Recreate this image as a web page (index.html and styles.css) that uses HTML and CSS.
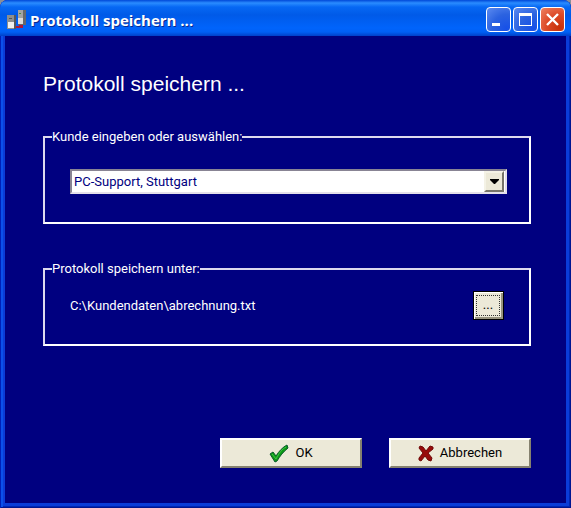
FILE: index.html
```html
<!DOCTYPE html>
<html lang="de">
<head>
<meta charset="utf-8">
<meta name="viewport" content="width=device-width, initial-scale=1">
<title>Protokoll speichern ...</title>
<link rel="stylesheet" href="styles.css">
</head>
<body>
<div class="window">
  <header class="titlebar">
    <svg class="app-icon" viewBox="0 0 20 20" aria-hidden="true">
      <path d="M11 0h8v15h-8z" fill="#66686b"/>
      <path d="M11 0h5v14h-5z" fill="#a3a3a2"/>
      <path d="M11 8h5v6h-5z" fill="#dedcda"/>
      <path d="M12 3h2v1h-2z" fill="#4a8a40"/>
      <path d="M0 5h9v14H0z" fill="#55585c"/>
      <path d="M0 5h7v14H0z" fill="#8c8e8f"/>
      <path d="M1 12h6v6H1z" fill="#f1efed"/>
      <path d="M2 8h3v1H2z" fill="#555"/>
      <path d="M9 16h3v-1h4v3H9z" fill="#b01838"/>
    </svg>
    <span class="caption">Protokoll speichern ...</span>
    <div class="window-buttons">
      <button type="button" class="window-button" aria-label="Minimieren">
        <svg viewBox="0 0 23 23"><path d="M5 15h8v3H5z" fill="#fff"/></svg>
      </button>
      <button type="button" class="window-button" aria-label="Maximieren">
        <svg viewBox="0 0 23 23"><path d="M5 5h13v13H5zM6 8v9h11V8z" fill="#fff" fill-rule="evenodd"/></svg>
      </button>
      <button type="button" class="window-button close" aria-label="Schließen">
        <svg viewBox="0 0 23 23"><path d="M6 6l11 11M17 6L6 17" stroke="#fff" stroke-width="2.4" fill="none"/></svg>
      </button>
    </div>
  </header>
  <form class="content">
    <h1 class="heading">Protokoll speichern ...</h1>
    <fieldset class="group customer">
      <legend><label for="kunde">Kunde eingeben oder auswählen:</label></legend>
      <div class="combo">
        <select id="kunde"><option>PC-Support, Stuttgart</option></select>
        <span class="combo-arrow" aria-hidden="true"><svg viewBox="0 0 9 5"><path d="M0 0h9v1L5 5H4L0 1z"/></svg></span>
      </div>
    </fieldset>
    <fieldset class="group">
      <legend>Protokoll speichern unter:</legend>
      <div class="target">
        <span>C:\Kundendaten\abrechnung.txt</span>
        <button type="button" class="browse"><span>...</span></button>
      </div>
    </fieldset>
    <div class="actions">
      <button type="button" class="action">
        <svg viewBox="0 0 20 19" aria-hidden="true"><path d="M1 10l3-2 3 4C10 7 14 3 18 1l1 3C14 8 11 12 8 17l-2 1z" fill="#0b9a16" stroke="#0a5a2c"/><path d="M3 10l4 5C10 9 13 5 17 3" stroke="#3fc445" fill="none"/></svg>
        OK
      </button>
      <button type="button" class="action">
        <svg class="cross" viewBox="0 0 16 17" aria-hidden="true"><path d="M2 1l3 1 3 4 4-5 3 1v2l-5 4 4 5-1 3-3-1-3-4-4 5-2-1v-2l4-5-4-5z" fill="#980b0b" stroke="#700808"/></svg>
        Abbrechen
      </button>
    </div>
  </form>
</div>
</body>
</html>
```
FILE: styles.css
```css
* { box-sizing: border-box; }

body {
  margin: 0;
  background: #8a8f98;
  font: 13px/20px Roboto, "Liberation Sans", Arial, sans-serif;
  color: #fff;
}

button, select { font: inherit; }

.window {
  display: flex;
  flex-direction: column;
  min-height: 100vh;
  padding: 0 5px 5px;
  border-radius: 8px 8px 0 0;
  background: #0a3cd8;
  box-shadow: inset 1px 0 #0020b8, inset -1px -1px #001590, inset 3px 0 #0c50ea, inset -2px -2px #0026b4;
}

.titlebar {
  display: flex;
  align-items: center;
  height: 36px;
  margin: 0 -5px;
  padding: 3px 6px 0 7px;
  border-radius: 8px 8px 0 0;
  background: linear-gradient(#0048d8 0, #2a8cff 3px, #0668f4 7px, #005ae8 15px, #0064fc 28px, #0060f4 32px, #0040c8 36px);
}

.app-icon { width: 20px; height: 20px; margin-right: 3px; }

.caption {
  flex: 1;
  font: bold 15px/20px "Open Sans", sans-serif;
  text-shadow: 1px 1px #0a2a90;
}

.window-buttons { display: flex; gap: 2px; }

.window-button {
  width: 25px;
  height: 25px;
  padding: 0;
  border: 1px solid #fff;
  border-radius: 4px;
  background: radial-gradient(circle at 85% 90%, #1650e8, #2b62e0 50%, #5c8bf0);
}

.window-button svg { display: block; }

.window-button.close { background: radial-gradient(circle at 80% 85%, #c83008, #dd4b28 50%, #ee8464); }

.content {
  flex: 1;
  padding: 36px 35px 35px 38px;
  background: #000080;
}

.heading {
  margin: 0 0 31px;
  font: 21px/24px "Liberation Sans", Arial, sans-serif;
}

.group {
  min-width: 0;
  margin: 0 0 35px;
  padding: 12px 25px 24px;
  border: 2px solid;
  border-color: #dcd9ee #fff #fff #dcd9ee;
}

.group legend {
  margin-left: -18px;
  padding: 0;
}

.customer { padding: 22px 22px 28px 25px; }

.combo { position: relative; }

.combo select {
  display: block;
  width: 100%;
  height: 25px;
  padding: 0 28px 0 2px;
  appearance: none;
  border: 2px solid;
  border-color: #888494 #e4e0ea #e4e0ea #888494;
  border-radius: 0;
  background: #fff;
  color: #000080;
}

.combo-arrow {
  position: absolute;
  top: 2px;
  right: 3px;
  bottom: 2px;
  display: grid;
  place-items: center;
  width: 20px;
  border: 2px solid;
  border-color: #f4f2e6 #77746a #77746a #f4f2e6;
  background: #ece9d8;
  pointer-events: none;
}

.combo-arrow svg { width: 9px; height: 5px; }

.target {
  display: flex;
  align-items: center;
  justify-content: space-between;
}

.browse {
  width: 31px;
  height: 29px;
  padding: 2px;
  border: 1px solid #000;
  background: #ece9d8;
  box-shadow: inset 1px 1px #fff, inset -2px -2px #96937f;
}

.browse span {
  display: block;
  height: 21px;
  margin-right: 1px;
  border: 1px dotted #333;
  line-height: 18px;
}

.actions {
  display: flex;
  justify-content: flex-end;
  gap: 27px;
  margin-top: 92px;
}

.action {
  display: flex;
  align-items: center;
  justify-content: center;
  gap: 6px;
  width: 142px;
  height: 30px;
  padding: 0;
  border: 2px solid;
  border-color: #fff #85816f #85816f #fff;
  background: #ece9d8;
  color: #000;
}

.action svg { width: 20px; height: 19px; }

.action .cross { width: 16px; height: 17px; }
```
